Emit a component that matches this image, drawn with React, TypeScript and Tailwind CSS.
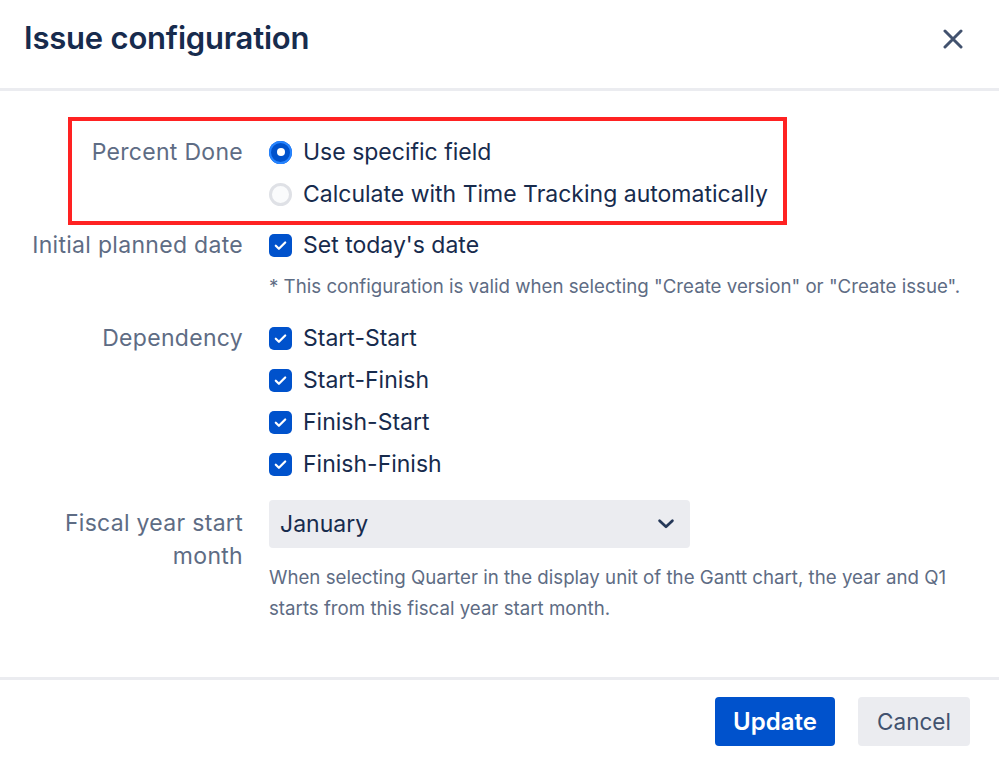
import { useState } from 'react';

const Radio = ({ checked }: { checked: boolean }) =>
  checked ? (
    <span className="flex h-[23px] w-[23px] items-center justify-center rounded-full bg-[#0052cc] ring-[2px] ring-inset ring-[#2684ff]">
      <span className="h-[8px] w-[8px] rounded-full bg-white" />
    </span>
  ) : (
    <span className="h-[23px] w-[23px] rounded-full border-[3px] border-[#dfe1e6] bg-[#fafbfc]" />
  );

const Checkbox = () => (
  <span className="flex h-[23px] w-[23px] items-center justify-center rounded-[5px] bg-[#0052cc]">
    <svg width="15" height="15" viewBox="0 0 16 16" fill="none">
      <path d="M3 8.3l3.3 3.2L13 4.8" stroke="white" strokeWidth="2.4" strokeLinecap="round" strokeLinejoin="round" />
    </svg>
  </span>
);

const Option = ({ children, control }: { children: React.ReactNode; control: React.ReactNode }) => (
  <div className="flex h-[42px] items-center gap-[11px]">
    {control}
    <span className="text-[23px] text-[#172b4d]">{children}</span>
  </div>
);

const Label = ({ children, className = '' }: { children: React.ReactNode; className?: string }) => (
  <div className={`pr-[26px] text-right text-[23px] tracking-[0.3px] text-[#5e6c84] ${className}`}>{children}</div>
);

export default function App() {
  const [month] = useState('January');

  return (
    <div className="flex h-[759px] w-[999px] flex-col bg-white font-['Inter',sans-serif] antialiased">
      {/* Header */}
      <div className="flex h-[91px] items-center justify-between border-b-[3px] border-[#ebecf0] pl-[24px] pr-[36px]">
        <h1 className="pb-[12px] text-[31px] font-semibold tracking-[-0.2px] text-[#172b4d]">Issue configuration</h1>
        <svg width="20" height="20" viewBox="0 0 20 20" fill="none" className="mb-[10px]">
          <path d="M2 2l16 16M18 2L2 18" stroke="#42526e" strokeWidth="3" strokeLinecap="round" />
        </svg>
      </div>

      {/* Body */}
      <div className="flex flex-1 flex-col pb-[50px] pt-[40px]">
        <div className="relative grid grid-cols-[269px_1fr]">
          <div className="pointer-events-none absolute left-[68px] top-[-14px] h-[108px] w-[719px] border-[4px] border-[#ff2222]" />
          <Label className="leading-[42px]">Percent Done</Label>
          <div className="flex flex-col">
            <Option control={<Radio checked />}>Use specific field</Option>
            <Option control={<Radio checked={false} />}>Calculate with Time Tracking automatically</Option>
          </div>
        </div>

        <div className="mt-[9px] grid grid-cols-[269px_1fr]">
          <Label className="leading-[42px]">Initial planned date</Label>
          <div className="flex flex-col">
            <Option control={<Checkbox />}>Set today&apos;s date</Option>
            <p className="mt-[6px] text-[18.7px] leading-[30px] text-[#5e6c84]">
              * This configuration is valid when selecting "Create version" or "Create issue".
            </p>
          </div>
        </div>

        <div className="mt-[15px] grid grid-cols-[269px_1fr]">
          <Label className="leading-[42px]">Dependency</Label>
          <div className="flex flex-col">
            <Option control={<Checkbox />}>Start-Start</Option>
            <Option control={<Checkbox />}>Start-Finish</Option>
            <Option control={<Checkbox />}>Finish-Start</Option>
            <Option control={<Checkbox />}>Finish-Finish</Option>
          </div>
        </div>

        <div className="mt-[15px] grid grid-cols-[269px_1fr]">
          <Label className="pt-[7px] leading-[33px]">
            Fiscal year start
            <br />
            month
          </Label>
          <div className="flex flex-col">
            <div className="flex h-[48px] w-[421px] items-center justify-between rounded-[4px] bg-[#ebecf0] pl-[11px] pr-[13px]">
              <span className="text-[23px] text-[#172b4d]">{month}</span>
              <svg width="22" height="22" viewBox="0 0 24 24" fill="none">
                <path d="M5 8.5l7 6.5 7-6.5" stroke="#253858" strokeWidth="3" strokeLinecap="round" strokeLinejoin="round" />
              </svg>
            </div>
            <p className="mt-[14px] w-[700px] text-[18.7px] leading-[31px] text-[#5e6c84]">
              When selecting Quarter in the display unit of the Gantt chart, the year and Q1 starts from this fiscal year start month.
            </p>
          </div>
        </div>
      </div>

      {/* Footer */}
      <div className="flex items-start justify-end gap-[23px] border-t-[3px] border-[#ebecf0] pb-[13px] pr-[29px] pt-[17px]">
        <button className="h-[49px] w-[120px] rounded-[4px] bg-[#0052cc] text-[24px] font-semibold text-white">Update</button>
        <button className="h-[49px] w-[112px] rounded-[4px] bg-[#ebecf0] text-[22.5px] text-[#42526e]">Cancel</button>
      </div>
    </div>
  );
}
